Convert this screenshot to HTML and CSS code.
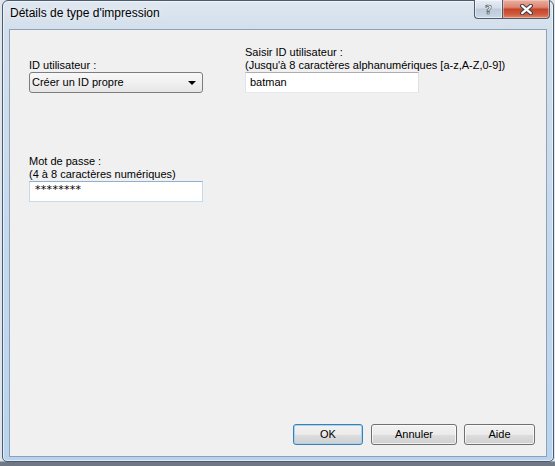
FILE: index.html
```html
<!DOCTYPE html>
<html lang="fr">
<head>
<meta charset="utf-8">
<title>Détails de type d'impression</title>
<link rel="stylesheet" href="styles.css">
</head>
<body>
<div class="window">
  <div class="titlebar">
    <span class="title">Détails de type d'impression</span>
    <div class="caption-buttons">
      <div class="cbtn help"><span>?</span></div>
      <div class="cbtn close">
        <svg width="13" height="11" viewBox="0 0 13 11">
          <path d="M2.2 1.8 L10.8 9.2 M10.8 1.8 L2.2 9.2" stroke="#3a3f48" stroke-width="4.2" stroke-linecap="round"/>
          <path d="M2.2 1.8 L10.8 9.2 M10.8 1.8 L2.2 9.2" stroke="#ffffff" stroke-width="2.2" stroke-linecap="round"/>
        </svg>
      </div>
    </div>
  </div>
  <div class="client">
    <div class="top-row">
      <div class="field">
        <div class="label">ID utilisateur :</div>
        <div class="select">Créer un ID propre<span class="arrow"></span></div>
      </div>
      <div class="field right">
        <div class="label">Saisir ID utilisateur :<br>(Jusqu'à 8 caractères alphanumériques [a-z,A-Z,0-9])</div>
        <div class="input">batman</div>
      </div>
    </div>
    <div class="field pw">
      <div class="label">Mot de passe :<br>(4 à 8 caractères numériques)</div>
      <div class="input focus">********</div>
    </div>
    <div class="buttons">
      <button class="btn default ok">OK</button>
      <button class="btn cancel">Annuler</button>
      <button class="btn help-btn">Aide</button>
    </div>
  </div>
</div>
</body>
</html>
```
FILE: styles.css
```css
html, body {
  margin: 0;
  padding: 0;
}
body {
  width: 555px;
  height: 466px;
  overflow: hidden;
  background: linear-gradient(to bottom, #dfe5ec 0px, #dfe5ec 461px, #6f7884 462px, #6f7884 100%);
  font-family: "Liberation Sans", Arial, sans-serif;
  font-size: 11px;
  color: #000;
}
.window {
  margin-left: 2px;
  width: 552px;
  height: 462px;
  box-sizing: border-box;
  border: 1px solid #4a5b6d;
  border-radius: 6px 6px 5px 5px;
  background: linear-gradient(to bottom, #dfe7f0 0px, #d3dfec 28px, #c2d8ee 60%, #b9d3ee 100%);
  box-shadow: inset 0 0 0 1px rgba(255,255,255,0.55);
  padding: 0 6px 4px 6px;
  display: flex;
  flex-direction: column;
}
.titlebar {
  height: 28px;
  display: flex;
  align-items: flex-start;
  flex: none;
}
.title {
  font-size: 12px;
  line-height: 15px;
  margin-top: 5px;
  padding-left: 1px;
  color: #000;
  text-shadow: 0 0 6px rgba(255,255,255,0.9);
}
.caption-buttons {
  margin-left: auto;
  margin-right: -3px;
  margin-top: -1px;
  display: flex;
}
.cbtn {
  height: 19px;
  box-sizing: border-box;
  border: 1px solid #4d5b6b;
  border-top: none;
  display: flex;
  align-items: center;
  justify-content: center;
}
.help {
  width: 28px;
  border-right: none;
  border-radius: 0 0 0 4px;
  background: linear-gradient(to bottom, #e6edf5 0%, #d3dde8 45%, #bccadb 50%, #c9d7e6 100%);
  box-shadow: inset 0 0 0 1px rgba(255,255,255,0.5);
}
.help span {
  font-family: "DejaVu Sans", sans-serif;
  font-weight: bold;
  font-size: 12px;
  line-height: 12px;
  color: #fff;
  -webkit-text-stroke: 0.6px #3a3f48;
  margin-top: 1px;
}
.close {
  width: 48px;
  border-radius: 0 0 4px 0;
  background: linear-gradient(to bottom, #eab0a2 0%, #de8571 40%, #c6442a 52%, #cf5c3f 80%, #e08a6e 100%);
  box-shadow: inset 0 0 0 1px rgba(255,220,210,0.45);
}
.close svg {
  display: block;
  margin-top: 1px;
}
.client {
  flex: 1;
  border: 1px solid #8ea2b7;
  background: #f0f0f0;
  display: flex;
  flex-direction: column;
  min-height: 0;
}
.label {
  line-height: 13px;
  white-space: nowrap;
}
.top-row {
  display: flex;
  align-items: flex-end;
  padding: 16px 0 0 19px;
}
.field {
  width: 174px;
}
.field.right {
  margin-left: 42px;
}
.field.pw {
  margin: 62px 0 0 19px;
}
.select {
  position: relative;
  height: 21px;
  box-sizing: border-box;
  border: 1px solid #7d7d7d;
  border-radius: 3px;
  background: linear-gradient(to bottom, #f8f8f8 0%, #f0f0f0 50%, #e6e6e6 100%);
  padding-left: 2px;
  line-height: 19px;
}
.arrow {
  position: absolute;
  right: 6px;
  top: 8px;
  width: 0;
  height: 0;
  border-left: 4px solid transparent;
  border-right: 4px solid transparent;
  border-top: 4px solid #000;
}
.input {
  height: 21px;
  box-sizing: border-box;
  border: 1px solid;
  border-color: #abadb3 #dbdfe6 #e3e9ef #e2e3ea;
  background: #fff;
  padding-left: 4px;
  line-height: 19px;
}
.input.focus {
  border-color: #8fb0d3 #c3d8ec #c8dcef #c3d8ec;
  padding-left: 5px;
  font-family: "DejaVu Sans", sans-serif;
  font-size: 11px;
  letter-spacing: 0.3px;
  line-height: 15px;
}
.buttons {
  margin-top: auto;
  display: flex;
  justify-content: flex-end;
  padding: 0 11px 11px 0;
}
.btn {
  height: 21px;
  box-sizing: border-box;
  border: 1px solid #707070;
  border-radius: 3px;
  background: linear-gradient(to bottom, #f2f2f2 0%, #ebebeb 50%, #dddddd 51%, #cfcfcf 100%);
  box-shadow: inset 0 0 0 1px rgba(255,255,255,0.7);
  font-family: "Liberation Sans", Arial, sans-serif;
  font-size: 11px;
  color: #000;
  padding: 0;
  line-height: 19px;
}
.btn.default {
  border-color: #3c7fb1;
  box-shadow: inset 0 0 0 1px #a6d4f1;
}
.ok { width: 70px; }
.cancel { width: 86px; margin-left: 8px; }
.help-btn { width: 71px; margin-left: 7px; }
```
